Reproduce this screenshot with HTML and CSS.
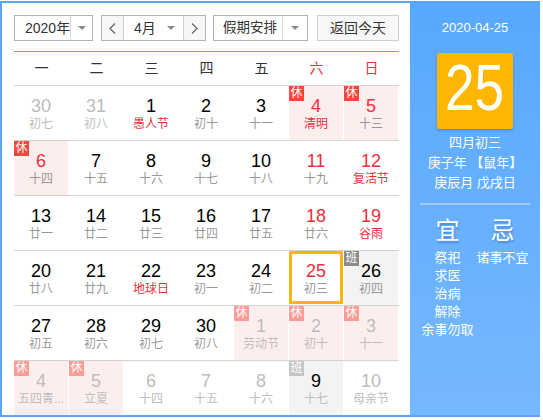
FILE: index.html
```html
<!DOCTYPE html>
<html lang="zh-CN">
<head>
<meta charset="utf-8">
<title>万年历</title>
<link rel="stylesheet" href="styles.css">
</head>
<body>
<div class="cal">
  <div class="main">
    <div class="toolbar">
      <div class="sel sel-year">
        <span class="sel-text">2020年</span>
        <span class="sel-arrow"><i class="tri"></i></span>
      </div>
      <div class="sel sel-month">
        <span class="nav nav-prev"><svg width="7" height="11" viewBox="0 0 7 11"><polyline points="6,0.5 1,5.5 6,10.5" fill="none" stroke="#666" stroke-width="1.2"/></svg></span>
        <span class="sel-text month-text">4月<i class="tri"></i></span>
        <span class="nav nav-next"><svg width="7" height="11" viewBox="0 0 7 11"><polyline points="1,0.5 6,5.5 1,10.5" fill="none" stroke="#666" stroke-width="1.2"/></svg></span>
      </div>
      <div class="sel sel-holiday">
        <span class="sel-text">假期安排</span>
        <span class="sel-arrow"><i class="tri"></i></span>
      </div>
      <div class="btn-today">返回今天</div>
    </div>
    <div class="rule"></div>
    <div class="weekdays">
      <span>一</span><span>二</span><span>三</span><span>四</span><span>五</span><span class="red">六</span><span class="red">日</span>
    </div>
    <div class="rows">
      <div class="row">
        <div class="cell om"><div class="num">30</div><div class="lunar">初七</div></div>
        <div class="cell om"><div class="num">31</div><div class="lunar">初八</div></div>
        <div class="cell"><div class="num">1</div><div class="lunar red">愚人节</div></div>
        <div class="cell"><div class="num">2</div><div class="lunar">初十</div></div>
        <div class="cell"><div class="num">3</div><div class="lunar">十一</div></div>
        <div class="cell hol"><span class="badge">休</span><div class="num red">4</div><div class="lunar red">清明</div></div>
        <div class="cell hol"><span class="badge">休</span><div class="num red">5</div><div class="lunar">十三</div></div>
      </div>
      <div class="row">
        <div class="cell hol"><span class="badge">休</span><div class="num red">6</div><div class="lunar">十四</div></div>
        <div class="cell"><div class="num">7</div><div class="lunar">十五</div></div>
        <div class="cell"><div class="num">8</div><div class="lunar">十六</div></div>
        <div class="cell"><div class="num">9</div><div class="lunar">十七</div></div>
        <div class="cell"><div class="num">10</div><div class="lunar">十八</div></div>
        <div class="cell"><div class="num red">11</div><div class="lunar">十九</div></div>
        <div class="cell"><div class="num red">12</div><div class="lunar red">复活节</div></div>
      </div>
      <div class="row">
        <div class="cell"><div class="num">13</div><div class="lunar">廿一</div></div>
        <div class="cell"><div class="num">14</div><div class="lunar">廿二</div></div>
        <div class="cell"><div class="num">15</div><div class="lunar">廿三</div></div>
        <div class="cell"><div class="num">16</div><div class="lunar">廿四</div></div>
        <div class="cell"><div class="num">17</div><div class="lunar">廿五</div></div>
        <div class="cell"><div class="num red">18</div><div class="lunar">廿六</div></div>
        <div class="cell"><div class="num red">19</div><div class="lunar red">谷雨</div></div>
      </div>
      <div class="row">
        <div class="cell"><div class="num">20</div><div class="lunar">廿八</div></div>
        <div class="cell"><div class="num">21</div><div class="lunar">廿九</div></div>
        <div class="cell"><div class="num">22</div><div class="lunar red">地球日</div></div>
        <div class="cell"><div class="num">23</div><div class="lunar">初一</div></div>
        <div class="cell"><div class="num">24</div><div class="lunar">初二</div></div>
        <div class="cell today"><div class="num red">25</div><div class="lunar">初三</div></div>
        <div class="cell work"><span class="badge badge-work">班</span><div class="num">26</div><div class="lunar">初四</div></div>
      </div>
      <div class="row">
        <div class="cell"><div class="num">27</div><div class="lunar">初五</div></div>
        <div class="cell"><div class="num">28</div><div class="lunar">初六</div></div>
        <div class="cell"><div class="num">29</div><div class="lunar">初七</div></div>
        <div class="cell"><div class="num">30</div><div class="lunar">初八</div></div>
        <div class="cell om hol"><span class="badge">休</span><div class="num">1</div><div class="lunar">劳动节</div></div>
        <div class="cell om hol"><span class="badge">休</span><div class="num">2</div><div class="lunar">初十</div></div>
        <div class="cell om hol"><span class="badge">休</span><div class="num">3</div><div class="lunar">十一</div></div>
      </div>
      <div class="row">
        <div class="cell om hol"><span class="badge">休</span><div class="num">4</div><div class="lunar">五四青...</div></div>
        <div class="cell om hol"><span class="badge">休</span><div class="num">5</div><div class="lunar">立夏</div></div>
        <div class="cell om"><div class="num">6</div><div class="lunar">十四</div></div>
        <div class="cell om"><div class="num">7</div><div class="lunar">十五</div></div>
        <div class="cell om"><div class="num">8</div><div class="lunar">十六</div></div>
        <div class="cell om work"><span class="badge badge-work">班</span><div class="num num-dark">9</div><div class="lunar">十七</div></div>
        <div class="cell om"><div class="num">10</div><div class="lunar">母亲节</div></div>
      </div>
    </div>
  </div>
  <div class="side">
    <div class="side-date">2020-04-25</div>
    <div class="bigday"><span class="bignum">25</span></div>
    <div class="side-lunar">
      <div>四月初三</div>
      <div>庚子年 【鼠年】</div>
      <div>庚辰月 戊戌日</div>
    </div>
    <div class="side-rule"></div>
    <div class="yiji">
      <div class="yj-col">
        <div class="yj-head">宜</div>
        <ul class="yj-list">
          <li>祭祀</li><li>求医</li><li>治病</li><li>解除</li><li>余事勿取</li>
        </ul>
      </div>
      <div class="yj-col">
        <div class="yj-head">忌</div>
        <ul class="yj-list">
          <li>诸事不宜</li>
        </ul>
      </div>
    </div>
  </div>
</div>
</body>
</html>
```

FILE: styles.css
```css
* { box-sizing: border-box; }
body {
  margin: 0;
  background: #fff;
  font-family: "Liberation Sans", "Noto Sans CJK SC", sans-serif;
  color: #333;
}
.cal {
  display: flex;
  width: 540px;
  height: 416px;
  margin-top: 1px;
  border: 2px solid #5aa7f5;
  border-right: 0;
}
.main {
  width: 408px;
  padding: 12px 11px 0 12px;
  background: #fff;
}
.toolbar {
  display: flex;
  height: 26px;
}
.sel {
  display: flex;
  height: 26px;
  border: 1px solid #b2b2b2;
  background: #fff;
  font-size: 14px;
  line-height: 24px;
  color: #333;
}
.sel-text {
  flex: 1;
  padding-left: 10px;
  white-space: nowrap;
}
.sel-arrow {
  display: flex;
  align-items: center;
  justify-content: center;
  border-left: 1px solid #dcdcdc;
}
.tri {
  display: inline-block;
  width: 0;
  height: 0;
  border-left: 4px solid transparent;
  border-right: 4px solid transparent;
  border-top: 4px solid #8a8a8a;
}
.sel-year { width: 79px; }
.sel-year .sel-arrow { width: 24px; }
.sel-month { width: 105px; margin-left: 8px; }
.nav {
  width: 22px;
  display: flex;
  align-items: center;
  justify-content: center;
  background: #f7f7f7;
}
.nav-prev { border-right: 1px solid #d0d0d0; }
.nav-next { border-left: 1px solid #d0d0d0; }
.month-text {
  display: flex;
  align-items: center;
  justify-content: space-between;
  padding: 0 8px 0 10px;
}
.sel-holiday { width: 95px; margin-left: 7px; }
.sel-holiday .sel-text { padding-left: 9px; font-size: 13.5px; }
.sel-holiday .sel-arrow { width: 25px; }
.btn-today {
  width: 82px;
  height: 26px;
  margin-left: 9px;
  border: 1px solid #cfcfcf;
  background: #f7f7f7;
  font-size: 14px;
  line-height: 24px;
  text-align: center;
  color: #333;
}
.rule {
  margin-top: 10px;
  height: 1px;
  background: #5fa6ee;
}
.weekdays {
  display: grid;
  grid-template-columns: repeat(7, 55px);
  height: 33px;
  line-height: 33px;
  font-size: 14px;
  text-align: center;
  color: #333;
}
.red { color: #ee2f3b; }
.weekdays .red { color: #ee2f3b; }
.row {
  display: grid;
  grid-template-columns: repeat(7, 54px);
  column-gap: 1px;
  height: 55px;
  border-top: 1px solid #d3d3d3;
}
.cell {
  position: relative;
  height: 54px;
  padding-top: 10px;
  text-align: center;
}
.num {
  height: 20px;
  font-size: 18px;
  line-height: 20px;
  color: #000;
}
.num.red { color: #ee2f3b; }
.lunar {
  height: 16px;
  font-size: 12px;
  line-height: 16px;
  color: #999;
  white-space: nowrap;
}
.lunar.red { color: #ee2f3b; }
.hol { background: #fdeeee; }
.work { background: #f3f3f3; }
.om .num, .om .lunar { color: #bdbdbd; }
.om .num.num-dark { color: #000; }
.badge {
  position: absolute;
  left: 0;
  top: 0;
  width: 15px;
  height: 15px;
  font-size: 12px;
  line-height: 15px;
  text-align: center;
  color: #fff;
  background: #f5473b;
}
.badge-work { background: #8c8c8c; }
.om .badge { background: #f99d96; }
.om .badge-work { background: #c6c6c6; }
.today::after {
  content: "";
  position: absolute;
  left: 0;
  top: 0;
  right: 0;
  bottom: 1px;
  border: 3px solid #fdb70a;
}
.side {
  width: 130px;
  background: linear-gradient(#58a8ff, #76b8fd);
  color: #fff;
  text-align: center;
  padding-top: 15px;
}
.side-date {
  font-size: 13px;
  line-height: 20px;
}
.bigday {
  width: 76px;
  height: 76px;
  margin: 15px auto 0;
  background: #ffb600;
  border-radius: 3px;
  box-shadow: 0 2px 3px rgba(0, 60, 140, 0.25);
  font-size: 64px;
  line-height: 70px;
  color: #fff;
}
.bignum {
  display: inline-block;
  transform: scaleX(0.83);
}
.side-lunar {
  margin-top: 4px;
  font-size: 13px;
  line-height: 20px;
  white-space: nowrap;
}
.side-rule {
  margin: 10px 10px 0;
  height: 2px;
  background: rgba(255, 255, 255, 0.35);
}
.yiji {
  display: flex;
  margin-top: 11px;
  padding: 0 10px;
}
.yj-col {
  width: 55px;
}
.yj-head {
  font-size: 24px;
  line-height: 30px;
  text-shadow: 1px 2px 2px rgba(0, 50, 130, 0.3);
}
.yj-list {
  list-style: none;
  margin: 3px 0 0;
  padding: 0;
  font-size: 13px;
  line-height: 18px;
  white-space: nowrap;
}
```
